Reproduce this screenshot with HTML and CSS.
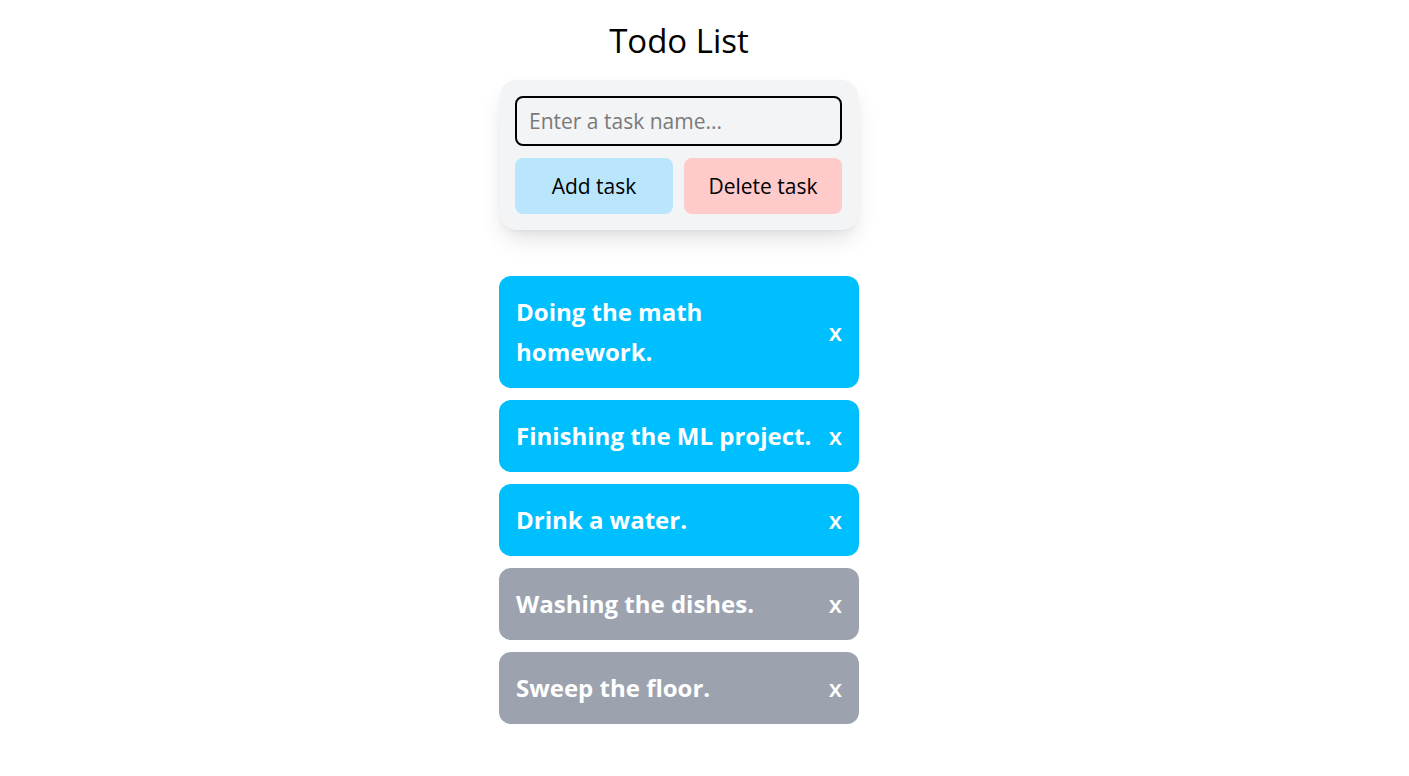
FILE: index.html
```html
<!DOCTYPE html>
<html lang="en">
<head>
<meta charset="utf-8">
<title>Todo List</title>
<link rel="stylesheet" href="styles.css">
</head>
<body>
<div class="page">
<main class="app">
  <h1 class="title">Todo List</h1>
  <section class="panel">
    <input class="task-input" type="text" placeholder="Enter a task name...">
    <div class="actions">
      <button class="btn btn-add">Add task</button>
      <button class="btn btn-delete">Delete task</button>
    </div>
  </section>
  <ul class="tasks">
    <li class="task task-active"><span class="task-name">Doing the math homework.</span><span class="task-remove">x</span></li>
    <li class="task task-active"><span class="task-name">Finishing the ML project.</span><span class="task-remove">x</span></li>
    <li class="task task-active"><span class="task-name">Drink a water.</span><span class="task-remove">x</span></li>
    <li class="task task-done"><span class="task-name">Washing the dishes.</span><span class="task-remove">x</span></li>
    <li class="task task-done"><span class="task-name">Sweep the floor.</span><span class="task-remove">x</span></li>
  </ul>
</main>
</div>
</body>
</html>
```
FILE: styles.css
```css
* { box-sizing: border-box; }
html, body { margin: 0; padding: 0; background: #ffffff; }
body {
  font-family: "Open Sans", "Noto Sans", "DejaVu Sans", sans-serif;
  color: #000;
}
.page {
  display: flex;
  justify-content: center;
  padding-right: 51px;
}
.app {
  width: 360px;
  padding-top: 20px;
  display: flex;
  flex-direction: column;
}
.title {
  margin: 0;
  text-align: center;
  font-size: 33px;
  font-weight: 400;
  line-height: 42px;
  height: 60px;
}
.panel {
  margin: 0 1px;
  background: #f3f4f6;
  border-radius: 16px;
  padding: 16px 16px 16px 15px;
  display: flex;
  flex-direction: column;
  gap: 12px;
  box-shadow: 0 12px 24px -4px rgba(0,0,0,0.12), 0 4px 10px -4px rgba(0,0,0,0.08);
}
.task-input {
  height: 50px;
  width: 100%;
  border: 2px solid #000;
  border-radius: 8px;
  background: #f3f4f6;
  padding: 0 12px;
  font-family: inherit;
  font-size: 21px;
  color: #000;
  outline: none;
}
.task-input::placeholder { color: #7a7a7a; }
.actions {
  display: grid;
  grid-template-columns: 1fr 1fr;
  gap: 11px;
}
.btn {
  height: 56px;
  border: none;
  border-radius: 8px;
  font-family: inherit;
  font-size: 21px;
  color: #000;
}
.btn-add { background: #bae6fd; }
.btn-delete { background: #fecaca; }
.tasks {
  list-style: none;
  margin: 46px 0 0;
  padding: 0;
  display: flex;
  flex-direction: column;
  gap: 12px;
}
.task {
  display: flex;
  align-items: center;
  justify-content: space-between;
  gap: 14px;
  padding: 16px 17px;
  border-radius: 12px;
  color: #fff;
  font-size: 24px;
  font-weight: 700;
  line-height: 40px;
}
.task-name { max-width: 302px; }
.task-active { background: #00bfff; }
.task-done { background: #9ca3af; }
.task-remove { font-weight: 600; }
```
